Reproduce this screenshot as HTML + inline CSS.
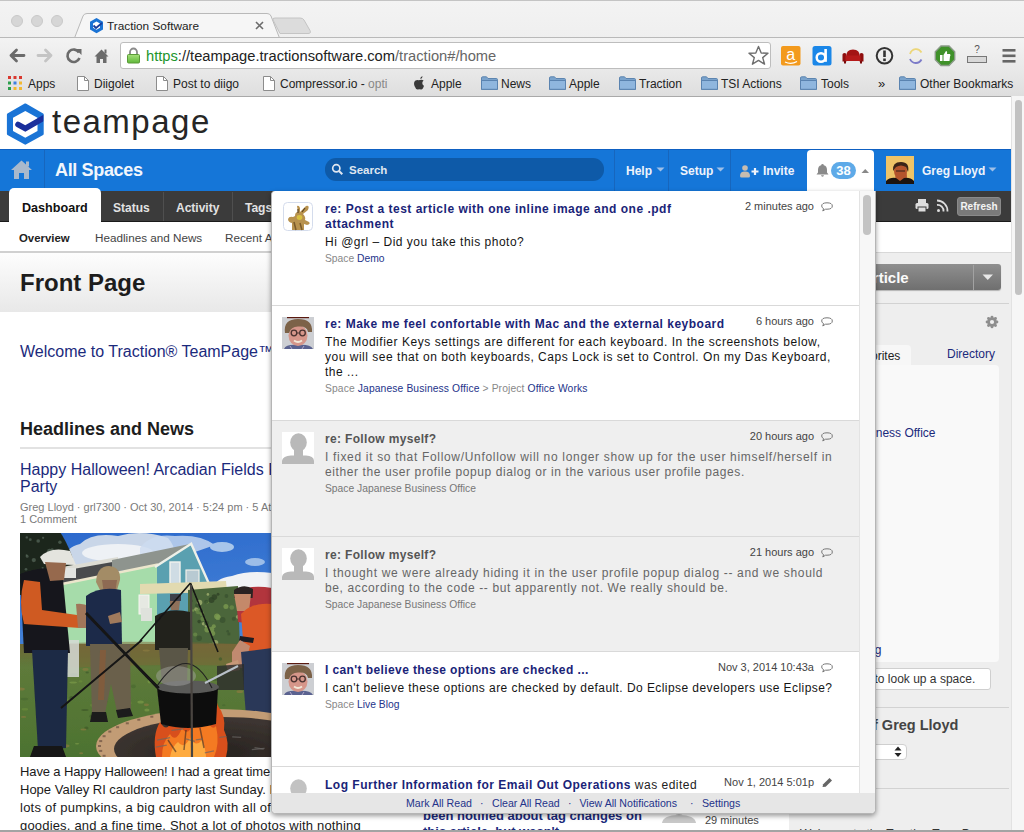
<!DOCTYPE html>
<html><head><meta charset="utf-8">
<style>
*{box-sizing:border-box;margin:0;padding:0}
html,body{width:1024px;height:832px;overflow:hidden;background:#fff;font-family:"Liberation Sans",sans-serif;color:#222}
.a{position:absolute;white-space:nowrap}
/* chrome */
#tabstrip{left:0;top:0;width:1024px;height:38px;background:linear-gradient(#f3f3f3,#efefef);border-top:1px solid #c4c4c4}
.tl{position:absolute;width:12px;height:12px;border-radius:50%;background:#d6d6d6;border:1px solid #c9c9c9;top:15px}
#toolbar{left:0;top:37px;width:1024px;height:35px;background:linear-gradient(#f3f3f3,#e8e8e8);border-top:1px solid #b9b9b9}
#bmbar{left:0;top:72px;width:1024px;height:25px;background:linear-gradient(#e8e8e8,#dedede);border-bottom:1px solid #a9a9a9}
#url{left:120px;top:42px;width:651px;height:27px;background:#fff;border:1px solid #bdbdbd;border-radius:3px}
.bm{position:absolute;top:77px;font-size:12px;color:#222;line-height:14px}
.doc{position:absolute;top:76px;width:11px;height:14px;border:1px solid #8a8a8a;background:#fff}
.fold{position:absolute;top:77px;width:16px;height:12px;background:linear-gradient(#a9c6e2,#6f98c2);border:1px solid #5e84ad;border-radius:1px}
/* page */
#blue{left:0;top:149px;width:1011px;height:42px;background:#1576d8;border-top:1px solid #0e60c2}
#dark{left:0;top:191px;width:1011px;height:31px;background:#3b3b3b;border-bottom:1px solid #1a1a1a}
.nav{position:absolute;top:163px;font-size:12px;font-weight:bold;color:#eef3fb;line-height:16px}
.vdiv{position:absolute;width:1px;background:#1766bd}
.dtab{position:absolute;top:200px;font-size:12px;font-weight:bold;color:#e2e2e2;line-height:16px}
.ddiv{position:absolute;top:192px;width:1px;height:29px;background:#4f4f4f}
.sub{position:absolute;top:231px;font-size:11.7px;color:#444;line-height:14px}
#fphead{left:0;top:251px;width:789px;height:61px;background:linear-gradient(#fdfdfd,#e8e8e8);border-top:2px solid #d0d0d0}
#side{left:789px;top:252px;width:222px;height:578px;background:#eeeeee;border-top:1px solid #d8d8d8}
#pscroll{left:1011px;top:96px;width:13px;height:734px;background:#f6f6f6;border-left:1px solid #e2e2e2}
#pthumb{left:1015px;top:100px;width:7px;height:195px;background:#c2c2c2;border-radius:4px}
#bottomline{left:0;top:830px;width:1024px;height:2px;background:#a3a3a3}
/* popup */
#pop{left:271px;top:191px;width:605px;height:623px;background:#fff;border:1px solid #b5b5b5;border-top:none;border-radius:4px 0 5px 5px;box-shadow:0 2px 5px rgba(0,0,0,.4);overflow:hidden}
.item{position:absolute;left:0;width:587px;height:115px;border-bottom:1px solid #d9d9d9}
.item.rd{background:#efefef}
.av{position:absolute;left:10px;top:11px;width:32px;height:32px}
.tt{position:absolute;left:53px;top:10.7px;font-size:12px;letter-spacing:0.5px;font-weight:bold;color:#1a2478;line-height:15px;white-space:nowrap}
.bd{position:absolute;left:53px;font-size:12px;letter-spacing:0.5px;color:#151515;line-height:15.2px;white-space:nowrap}
.sp{position:absolute;left:53px;font-size:10.3px;color:#888;line-height:12px;white-space:nowrap}
.sp b{font-weight:normal;color:#24338a}
.ts{position:absolute;right:45px;top:8px;font-size:11px;color:#444;line-height:14px}
.rd .tt{color:#555}.rd .bd{color:#666}.rd .sp{color:#777}.rd .sp b{color:#777}
.bub{position:absolute;right:26px;top:11px;width:12px;height:10px}
#pfoot{position:absolute;left:0;top:602px;width:603px;height:20px;background:#e6e6e6;font-size:10.6px;color:#24338a;line-height:20px;white-space:nowrap}
#pstrack{position:absolute;left:587px;top:0;width:17px;height:602px;background:#f7f7f7;border-left:1px solid #e3e3e3}
#psthumb{position:absolute;left:591px;top:4px;width:8px;height:40px;background:#c3c3c3;border-radius:4px}
</style></head><body>

<!-- ================= BROWSER CHROME ================= -->
<div id="tabstrip" class="a"></div>
<div class="tl" style="left:11px"></div>
<div class="tl" style="left:31px"></div>
<div class="tl" style="left:51px"></div>
<svg class="a" style="left:0;top:0" width="330" height="40">
  <path d="M74.5 38 L83 16 Q84 13.5 87 13.5 L267 13.5 Q270 13.5 271 16 L279.5 38" fill="#f6f6f6" stroke="#b9b9b9" stroke-width="1"/>
  <path d="M280 33.5 L273 20 Q272 18 275 18 L300 18 Q303 18 304 20 L310 30.5 Q311.5 33.5 308 33.5 Z" fill="#dcdcdc" stroke="#c4c4c4" stroke-width="1"/>
  <path d="M96.5 18 L103 21.8 L103 29.4 L96.5 33.2 L90 29.4 L90 21.8 Z" fill="#1a73d4"/>
  <path d="M96.5 21.5 L100 23.5 L100 27.7 L96.5 29.7 L93 27.7 L93 23.5 Z" fill="#fff"/>
  <path d="M93.5 25.5 L96 28 L102 23" fill="none" stroke="#183b9a" stroke-width="1.8"/>
  <path d="M256 22 L263 29 M263 22 L256 29" stroke="#6c6c6c" stroke-width="1.6"/>
</svg>
<div class="a" style="left:107px;top:19px;font-size:11.8px;color:#222;line-height:15px">Traction Software</div>

<div id="toolbar" class="a"></div>
<div id="bmbar" class="a"></div>
<svg class="a" style="left:0;top:40.8px" width="120" height="32">
  <path d="M11 14.5 L24 14.5 M16.5 9 L11 14.5 L16.5 20" fill="none" stroke="#6b6b6b" stroke-width="2.8" stroke-linecap="round" stroke-linejoin="round"/>
  <path d="M38 14.5 L51 14.5 M45.5 9 L51 14.5 L45.5 20" fill="none" stroke="#c4c4c4" stroke-width="2.8" stroke-linecap="round" stroke-linejoin="round"/>
  <path d="M79 11.5 A6.2 6.2 0 1 0 79.5 17" fill="none" stroke="#6b6b6b" stroke-width="2.6"/>
  <path d="M75.5 8 L81.5 8 L81.5 14 Z" fill="#6b6b6b"/>
  <path d="M94.5 15.5 L101.5 8.5 L108.5 15.5 L106.5 15.5 L106.5 22 L103 22 L103 18 L100 18 L100 22 L96.5 22 L96.5 15.5 Z" fill="#6b6b6b"/>
  <rect x="104.5" y="8.5" width="2" height="4" fill="#6b6b6b"/>
</svg>
<div id="url" class="a"></div>
<svg class="a" style="left:126px;top:47px" width="15" height="17"><path d="M4 7.5 L4 5 A3.5 3.5 0 0 1 11 5 L11 7.5" fill="none" stroke="#8a8a8a" stroke-width="1.8"/><defs><linearGradient id="lk" x1="0" y1="0" x2="0" y2="1"><stop offset="0" stop-color="#a6e07a"/><stop offset="1" stop-color="#5fb83a"/></linearGradient></defs><rect x="1.5" y="7.5" width="12" height="8.5" rx="1" fill="url(#lk)" stroke="#5a9a38" stroke-width="1"/></svg>
<div class="a" style="left:146px;top:48px;font-size:14.7px;color:#222;line-height:17px"><span style="color:#21952b">https</span>://teampage.tractionsoftware.com<span style="color:#666">/traction#/home</span></div>
<svg class="a" style="left:745px;top:44px" width="280" height="26">
  <path d="M13.5 2.5 L16.2 9 L23 9.3 L17.7 13.6 L19.6 20.2 L13.5 16.4 L7.4 20.2 L9.3 13.6 L4 9.3 L10.8 9 Z" fill="#fff" stroke="#6e6e6e" stroke-width="1.4" stroke-linejoin="round"/>
  <rect x="36" y="2" width="19.5" height="19.5" rx="2" fill="#f39a1d"/>
  <text x="45.7" y="16" font-family="Liberation Sans" font-size="16" fill="#fff" text-anchor="middle">a</text>
  <path d="M40 18 Q46 21 52 17.5" fill="none" stroke="#fff" stroke-width="1.3"/>
  <rect x="67.5" y="2" width="19" height="19.5" rx="2.5" fill="#1b87e8"/>
  <circle cx="76" cy="13.5" r="4.3" fill="none" stroke="#fff" stroke-width="2.5"/>
  <rect x="79.3" y="5" width="2.6" height="12.8" fill="#fff"/>
  <path d="M101.5 12 Q101 5.5 108 5.5 Q115 5.5 114.5 12 Z" fill="#a31414"/>
  <path d="M97.5 10.5 Q97.5 9 99.5 9 Q101.5 9 101.5 10.5 L101.5 17.5 L97.5 17.5 Z M114.5 10.5 Q114.5 9 116.5 9 Q118.5 9 118.5 10.5 L118.5 17.5 L114.5 17.5 Z" fill="#8e0e0e"/>
  <rect x="100.5" y="11.5" width="15" height="5.5" fill="#b51a1a"/>
  <rect x="99" y="17" width="2" height="2.5" fill="#7a0a0a"/><rect x="115" y="17" width="2" height="2.5" fill="#7a0a0a"/>
  <circle cx="139.5" cy="11.8" r="7.8" fill="none" stroke="#333" stroke-width="2"/>
  <rect x="138.2" y="6.5" width="2.6" height="6.5" fill="#333"/><rect x="138.2" y="14.5" width="2.6" height="2.6" fill="#333"/>
  <path d="M165 10 A6.5 7.5 0 0 1 176.5 8.5" fill="none" stroke="#ecd679" stroke-width="1.8"/>
  <path d="M165 15 A6.5 7 0 0 0 176.5 15.5" fill="none" stroke="#7c7bc8" stroke-width="1.8"/>
  <path d="M196 2 L204 2 L209.7 7.7 L209.7 15.8 L204 21.5 L196 21.5 L190.3 15.8 L190.3 7.7 Z" fill="#3f9129" stroke="#8a9a88" stroke-width="1.4"/>
  <path d="M195 11 L197.5 11 L197.5 17 L195 17 Z M198.5 11 L201 7 Q202.5 7 202 10 L205 10 Q206 11 205 12.5 L204.5 17 L198.5 17 Z" fill="#fff"/>
  <text x="232" y="9" font-family="Liberation Sans" font-size="10" fill="#555" text-anchor="middle">?</text>
  <rect x="222.5" y="12.5" width="19" height="6" fill="#d8d8d8" stroke="#777" stroke-width="1"/>
  <rect x="257.5" y="5" width="13" height="2.6" fill="#666"/>
  <rect x="257.5" y="10.5" width="13" height="2.6" fill="#666"/>
  <rect x="257.5" y="16" width="13" height="2.6" fill="#666"/>
</svg>

<!-- bookmarks -->
<svg class="a" style="left:8px;top:76px" width="15" height="14">
  <rect x="0" y="0" width="3" height="3" fill="#d9382f"/><rect x="5.5" y="0" width="3" height="3" fill="#d9382f"/><rect x="11" y="0" width="3" height="3" fill="#d9382f"/>
  <rect x="0" y="5.5" width="3" height="3" fill="#2c9e4b"/><rect x="5.5" y="5.5" width="3" height="3" fill="#3e7fe0"/><rect x="11" y="5.5" width="3" height="3" fill="#f2b830"/>
  <rect x="0" y="11" width="3" height="3" fill="#2c9e4b"/><rect x="5.5" y="11" width="3" height="3" fill="#f2b830"/><rect x="11" y="11" width="3" height="3" fill="#f2b830"/>
</svg>
<div class="bm" style="left:28px">Apps</div>
<svg class="a" style="left:77px;top:76px" width="12" height="15"><path d="M0.5 0.5 L7.5 0.5 L11.5 4.5 L11.5 14.5 L0.5 14.5 Z" fill="#fff" stroke="#8c8c8c"/><path d="M7.5 0.5 L7.5 4.5 L11.5 4.5" fill="none" stroke="#8c8c8c"/></svg>
<div class="bm" style="left:94px">Diigolet</div>
<svg class="a" style="left:156px;top:76px" width="12" height="15"><path d="M0.5 0.5 L7.5 0.5 L11.5 4.5 L11.5 14.5 L0.5 14.5 Z" fill="#fff" stroke="#8c8c8c"/><path d="M7.5 0.5 L7.5 4.5 L11.5 4.5" fill="none" stroke="#8c8c8c"/></svg>
<div class="bm" style="left:173px">Post to diigo</div>
<svg class="a" style="left:263px;top:76px" width="12" height="15"><path d="M0.5 0.5 L7.5 0.5 L11.5 4.5 L11.5 14.5 L0.5 14.5 Z" fill="#fff" stroke="#8c8c8c"/><path d="M7.5 0.5 L7.5 4.5 L11.5 4.5" fill="none" stroke="#8c8c8c"/></svg>
<div class="bm" style="left:280px">Compressor.io - <span style="color:#888">opti</span></div>
<svg class="a" style="left:413px;top:75px" width="14" height="16"><path d="M9.5 1 Q9.7 3.6 7.3 4.3 Q7.1 2 9.5 1 Z M7 5 Q9 4.4 10.6 5.5 Q8.8 6.8 9.4 9 Q10.2 10.6 11 10.8 Q10 14.5 8.2 14.5 Q7.3 14.2 6.4 14.2 Q5.4 14.2 4.6 14.6 Q2.8 14.4 1.5 11 Q0.2 7.5 2.5 5.6 Q4 4.6 5.6 5.2 Z" fill="#3a3a3a"/></svg>
<div class="bm" style="left:431px">Apple</div>
<svg class="a" style="left:481px;top:76px" width="17" height="14"><path d="M0.5 2 Q0.5 0.8 1.7 0.8 L5.5 0.8 L7 2.5 L15.3 2.5 Q16.5 2.5 16.5 3.7 L16.5 13.3 L0.5 13.3 Z" fill="#7aa3cc" stroke="#5d85b0"/><path d="M0.5 4.5 L16.5 4.5 L16.5 13.3 L0.5 13.3 Z" fill="#8fb6de" stroke="#5a83b0"/></svg>
<div class="bm" style="left:501px">News</div>
<svg class="a" style="left:549px;top:76px" width="17" height="14"><path d="M0.5 2 Q0.5 0.8 1.7 0.8 L5.5 0.8 L7 2.5 L15.3 2.5 Q16.5 2.5 16.5 3.7 L16.5 13.3 L0.5 13.3 Z" fill="#7aa3cc" stroke="#5d85b0"/><path d="M0.5 4.5 L16.5 4.5 L16.5 13.3 L0.5 13.3 Z" fill="#8fb6de" stroke="#5a83b0"/></svg>
<div class="bm" style="left:569px">Apple</div>
<svg class="a" style="left:619px;top:76px" width="17" height="14"><path d="M0.5 2 Q0.5 0.8 1.7 0.8 L5.5 0.8 L7 2.5 L15.3 2.5 Q16.5 2.5 16.5 3.7 L16.5 13.3 L0.5 13.3 Z" fill="#7aa3cc" stroke="#5d85b0"/><path d="M0.5 4.5 L16.5 4.5 L16.5 13.3 L0.5 13.3 Z" fill="#8fb6de" stroke="#5a83b0"/></svg>
<div class="bm" style="left:639px">Traction</div>
<svg class="a" style="left:701px;top:76px" width="17" height="14"><path d="M0.5 2 Q0.5 0.8 1.7 0.8 L5.5 0.8 L7 2.5 L15.3 2.5 Q16.5 2.5 16.5 3.7 L16.5 13.3 L0.5 13.3 Z" fill="#7aa3cc" stroke="#5d85b0"/><path d="M0.5 4.5 L16.5 4.5 L16.5 13.3 L0.5 13.3 Z" fill="#8fb6de" stroke="#5a83b0"/></svg>
<div class="bm" style="left:721px">TSI Actions</div>
<svg class="a" style="left:800px;top:76px" width="17" height="14"><path d="M0.5 2 Q0.5 0.8 1.7 0.8 L5.5 0.8 L7 2.5 L15.3 2.5 Q16.5 2.5 16.5 3.7 L16.5 13.3 L0.5 13.3 Z" fill="#7aa3cc" stroke="#5d85b0"/><path d="M0.5 4.5 L16.5 4.5 L16.5 13.3 L0.5 13.3 Z" fill="#8fb6de" stroke="#5a83b0"/></svg>
<div class="bm" style="left:821px">Tools</div>
<div class="bm" style="left:878px;font-size:13px">»</div>
<svg class="a" style="left:899px;top:76px" width="17" height="14"><path d="M0.5 2 Q0.5 0.8 1.7 0.8 L5.5 0.8 L7 2.5 L15.3 2.5 Q16.5 2.5 16.5 3.7 L16.5 13.3 L0.5 13.3 Z" fill="#7aa3cc" stroke="#5d85b0"/><path d="M0.5 4.5 L16.5 4.5 L16.5 13.3 L0.5 13.3 Z" fill="#8fb6de" stroke="#5a83b0"/></svg>
<div class="bm" style="left:920px">Other Bookmarks</div>

<!-- ================= PAGE ================= -->
<div class="a" style="left:0;top:97px;width:1011px;height:52px;background:#fff"></div>
<svg class="a" style="left:5px;top:101px" width="42" height="46">
  <defs><clipPath id="hx"><path d="M20.3 2.5 L38.3 12.8 L38.3 33.6 L20.3 43.5 L2.3 33.6 L2.3 12.8 Z"/></clipPath></defs>
  <path d="M20.3 3.5 L37.6 13.4 L37.6 33 L20.3 42.6 L3 33 L3 13.4 Z" fill="#1a74d6" stroke="#1a74d6" stroke-width="2.2" stroke-linejoin="round"/>
  <path d="M20.3 10 L32.5 16.8 L32.5 30 L20.3 36.7 L8 30 L8 16.8 Z" fill="#fff"/>
  <path d="M13 23.5 L20.3 27.5 L42 15" fill="none" stroke="#1a2f9c" stroke-width="5.6" stroke-linecap="round" clip-path="url(#hx)"/>
</svg>
<div class="a" style="left:52px;top:102.5px;font-size:33px;color:#262626;letter-spacing:1.5px;line-height:38px">teampage</div>

<div id="blue" class="a"></div>
<svg class="a" style="left:10px;top:159px" width="24" height="22">
  <path d="M1 11 L11.5 1.5 L22 11 L19 11 L19 20 L14 20 L14 14 L9 14 L9 20 L4 20 L4 11 Z" fill="#a9b9cc"/>
  <rect x="16" y="2.5" width="3" height="5" fill="#a9b9cc"/>
</svg>
<div class="vdiv" style="left:44px;top:150px;height:41px"></div>
<div class="a" style="left:55px;top:159px;font-size:18px;font-weight:bold;color:#f2f6fc;letter-spacing:-0.35px;line-height:22px">All Spaces</div>
<div class="a" style="left:325px;top:158px;width:279px;height:23px;background:#0e5aa8;border-radius:11px"></div>
<svg class="a" style="left:331px;top:163px" width="13" height="13"><circle cx="5.3" cy="5.3" r="3.6" fill="none" stroke="#dfe6f0" stroke-width="1.7"/><path d="M8 8 L11.3 11.3" stroke="#dfe6f0" stroke-width="2"/></svg>
<div class="a" style="left:349px;top:162px;font-size:11.5px;font-weight:bold;color:#dfe6f0;line-height:16px">Search</div>
<div class="vdiv" style="left:614px;top:150px;height:41px"></div>
<div class="nav" style="left:626px">Help</div>
<svg class="a" style="left:656px;top:167px" width="10" height="6"><path d="M0.5 0.5 L8.5 0.5 L4.5 4.5 Z" fill="#9fc0e8"/></svg>
<div class="vdiv" style="left:668px;top:150px;height:41px"></div>
<div class="nav" style="left:680px">Setup</div>
<svg class="a" style="left:716px;top:167px" width="10" height="6"><path d="M0.5 0.5 L8.5 0.5 L4.5 4.5 Z" fill="#9fc0e8"/></svg>
<div class="vdiv" style="left:730px;top:150px;height:41px"></div>
<svg class="a" style="left:739px;top:164px" width="22" height="14"><circle cx="6" cy="4" r="2.8" fill="#c6bcb0"/><path d="M1 12 Q1 7.6 6 7.6 Q11 7.6 11 12 Q11 13.5 9.5 13.5 L2.5 13.5 Q1 13.5 1 12 Z" fill="#c6bcb0"/><path d="M12.5 7.5 L19.5 7.5 M16 4 L16 11" stroke="#eef3fb" stroke-width="2.2"/></svg>
<div class="nav" style="left:763px">Invite</div>
<!-- bell tab -->
<div class="a" style="left:807px;top:150px;width:67px;height:42px;background:#fff;border-radius:4px 4px 0 0"></div>
<svg class="a" style="left:816px;top:163px" width="14" height="14"><path d="M6.5 1 Q7.8 1 7.8 2.2 Q11 3 11 7 L11 9.5 L12.5 11.5 L0.5 11.5 L2 9.5 L2 7 Q2 3 5.2 2.2 Q5.2 1 6.5 1 Z M5 12.3 L8 12.3 Q7.8 13.7 6.5 13.7 Q5.2 13.7 5 12.3 Z" fill="#8a8a8a"/></svg>
<div class="a" style="left:831px;top:162px;width:25px;height:17px;background:#5eaae8;border-radius:9px;font-size:13px;font-weight:bold;color:#fff;text-align:center;line-height:17px">38</div>
<svg class="a" style="left:861px;top:168px" width="9" height="6"><path d="M0.5 5 L8 5 L4.25 1 Z" fill="#888"/></svg>
<!-- avatar greg -->
<svg class="a" style="left:886px;top:156px" width="28" height="28">
  <rect width="28" height="28" fill="#efc468"/>
  <path d="M9 27 Q9 14 14 12 Q20 12 21 20 L20 27 Z" fill="#b85a30"/>
  <ellipse cx="14.5" cy="15" rx="6.5" ry="8.5" fill="#b4542c"/>
  <path d="M7 15 Q6 6 15 6 Q24 6 22 16 L20 11 Q15 8 10 11 Z" fill="#3a2418"/>
  <path d="M10 15 L19 15" stroke="#5a3020" stroke-width="1.4"/>
  <path d="M0 28 L0 25 Q4 21 10 22 L14 25 L18 22 Q24 21 28 25 L28 28 Z" fill="#1c1410"/>
</svg>
<div class="nav" style="left:922px;font-size:12px">Greg Lloyd</div>
<svg class="a" style="left:988px;top:167px" width="10" height="6"><path d="M0.5 0.5 L8.5 0.5 L4.5 4.5 Z" fill="#9fc0e8"/></svg>

<div id="dark" class="a"></div>
<div class="a" style="left:9px;top:188px;width:92px;height:34px;background:#fff;border-radius:5px 5px 0 0"></div>
<div class="dtab" style="left:22px;color:#111;font-size:12.6px">Dashboard</div>
<div class="dtab" style="left:113px">Status</div>
<div class="ddiv" style="left:163px"></div>
<div class="dtab" style="left:176px">Activity</div>
<div class="ddiv" style="left:232px"></div>
<div class="dtab" style="left:245px">Tags</div>
<svg class="a" style="left:914px;top:198px" width="36" height="16">
  <rect x="4" y="1" width="8" height="4" fill="#ddd"/>
  <rect x="1.5" y="5" width="13" height="6" rx="1.5" fill="#ddd"/>
  <rect x="4" y="9" width="8" height="5" fill="#ddd" stroke="#3b3b3b" stroke-width="1"/>
  <circle cx="24.5" cy="12.5" r="1.5" fill="#ddd"/>
  <path d="M23 7 A6 6 0 0 1 29.5 13.5" fill="none" stroke="#ddd" stroke-width="1.8"/>
  <path d="M23 2.5 A10.5 10.5 0 0 1 33.5 13.5" fill="none" stroke="#ddd" stroke-width="1.8"/>
</svg>
<div class="a" style="left:957px;top:197px;width:44px;height:19px;background:#7a7a7a;border-radius:3px;border:1px solid #8a8a8a;font-size:10px;font-weight:bold;color:#f4f4f4;text-align:center;line-height:17px">Refresh</div>

<div class="sub" style="left:19px;font-weight:bold;color:#222;font-size:11.4px">Overview</div>
<div class="sub" style="left:95px">Headlines and News</div>
<div class="sub" style="left:225px">Recent Activity</div>

<div id="fphead" class="a"></div>
<div class="a" style="left:20px;top:269px;font-size:24px;font-weight:bold;color:#1d1d1d;line-height:28px">Front Page</div>
<div class="a" style="left:20px;top:343px;font-size:16px;color:#1b2a7c;line-height:18px">Welcome to Traction® TeamPage™</div>
<div class="a" style="left:20px;top:418px;font-size:18px;font-weight:bold;color:#1d1d1d;line-height:22px">Headlines and News</div>
<div class="a" style="left:20px;top:447px;width:760px;height:2px;background:#e2e2e2"></div>
<div class="a" style="left:20px;top:461px;font-size:16px;color:#1b2a7c;line-height:17px">Happy Halloween! Arcadian Fields Fall Cauldron<br>Party</div>
<div class="a" style="left:20px;top:501px;font-size:11px;color:#7a7a7a;line-height:12px">Greg Lloyd · grl7300 · Oct 30, 2014 · 5:24 pm · 5 Attachments</div>
<div class="a" style="left:20px;top:513px;font-size:11px;color:#7a7a7a;line-height:12px">1 Comment</div>

<svg class="a" style="left:20px;top:533px" width="380" height="224" viewBox="20 533 380 224">
<defs>
<linearGradient id="sky" x1="0" y1="0" x2="0.2" y2="1"><stop offset="0" stop-color="#2a68cc"/><stop offset="1" stop-color="#5e9ae0"/></linearGradient>
<linearGradient id="grass" x1="0" y1="0" x2="0" y2="1"><stop offset="0" stop-color="#6e6638"/><stop offset="0.2" stop-color="#5e7a3a"/><stop offset="1" stop-color="#4b7230"/></linearGradient>
<radialGradient id="pit" cx="0.45" cy="0.55" r="0.55"><stop offset="0" stop-color="#26221f"/><stop offset="1" stop-color="#3e3632"/></radialGradient>
<filter id="bl" x="-5%" y="-5%" width="110%" height="110%"><feGaussianBlur stdDeviation="0.75"/></filter>
</defs>
<rect x="20" y="533" width="380" height="224" fill="#4d7431"/>
<g filter="url(#bl)">
<rect x="16" y="529" width="388" height="232" fill="url(#sky)"/>
<path d="M66 566 Q62 548 80 544 Q92 532 118 536 Q142 529 168 538 Q180 552 170 566 Z" fill="#c9d6e8"/>
<ellipse cx="118" cy="553" rx="36" ry="9" fill="#eef1f5"/>
<path d="M140 548 Q150 533 175 536 Q200 534 215 545 L195 552 L140 556 Z" fill="#cddcf0" opacity="0.8"/>
<path d="M212 591 Q214 578 232 576 Q248 570 272 573 L272 592 Z" fill="#f0f2f5"/>
<ellipse cx="222" cy="547" rx="12" ry="5" fill="#a8c6ea"/>
<ellipse cx="255" cy="562" rx="10" ry="4" fill="#9cbde8"/>
<path d="M16 529 L58 529 Q66 540 72 556 Q76 572 72 584 L16 596 Z" fill="#1f281e"/>
<circle cx="38.2" cy="541.0" r="1.8" fill="#56665a" opacity="0.7"/>
<circle cx="27.2" cy="556.4" r="1.4" fill="#56665a" opacity="0.7"/>
<circle cx="26.6" cy="555.3" r="1.0" fill="#56665a" opacity="0.7"/>
<circle cx="43.1" cy="537.8" r="1.1" fill="#56665a" opacity="0.7"/>
<circle cx="42.7" cy="568.1" r="1.1" fill="#56665a" opacity="0.7"/>
<circle cx="33.8" cy="560.1" r="2.1" fill="#56665a" opacity="0.7"/>
<circle cx="49.4" cy="550.9" r="2.2" fill="#56665a" opacity="0.7"/>
<circle cx="26.0" cy="569.3" r="1.3" fill="#56665a" opacity="0.7"/>
<circle cx="30.3" cy="539.7" r="1.4" fill="#56665a" opacity="0.7"/>
<circle cx="59.9" cy="542.2" r="1.7" fill="#56665a" opacity="0.7"/>
<circle cx="52.1" cy="549.9" r="1.7" fill="#56665a" opacity="0.7"/>
<circle cx="26.8" cy="537.4" r="1.2" fill="#56665a" opacity="0.7"/>
<circle cx="53.9" cy="552.1" r="1.4" fill="#56665a" opacity="0.7"/>
<circle cx="49.8" cy="553.1" r="1.4" fill="#56665a" opacity="0.7"/>
<path d="M62 568 L112 560 L112 578 L62 586 Z" fill="#4a4c4e"/>
<path d="M62 567 L118 557 L118 561 L62 571 Z" fill="#dcdcd4"/>
<rect x="64" y="568" width="12" height="10" fill="#e2e4e0"/>
<path d="M112 560 L191 543.7 L160 566 L112 572 Z" fill="#8e948e"/>
<path d="M57 585 L148 566 L158 565 L158 645 L57 645 Z" fill="#a6dcaa"/>
<path d="M57 585 L158 564.5" stroke="#ece6cc" stroke-width="2.4"/>
<path d="M104 612 Q112 600 118 612 L122 645 L104 645 Z" fill="#76b09a" opacity="0.7"/>
<path d="M157 566 L191.2 543.7 L208 584 L208 645 L157 645 Z" fill="#5aa0b0"/>
<path d="M155 567 L191.2 543.7 L210 586" fill="none" stroke="#eef0e8" stroke-width="2.4"/>
<rect x="170" y="562" width="10" height="24" fill="#cfdce4" stroke="#f2f2ee" stroke-width="1.4"/>
<rect x="186" y="570" width="13" height="16" fill="#b8cad2" stroke="#f0f0ea" stroke-width="1.2"/>
<rect x="139" y="595" width="10" height="19" fill="#e6e9e2" stroke="#f6f6f0" stroke-width="1"/>
<rect x="141" y="608" width="11" height="13" fill="#dfe2dc"/>
<path d="M140 584 L226 581 L227 592 L140 594 Z" fill="#e2dab0"/>
<path d="M188 590 L238 586 L240 652 L188 652 Z" fill="#4c663a"/>
<circle cx="227.7" cy="631.3" r="1.3" fill="#3a5230" opacity="0.8"/>
<circle cx="203.0" cy="618.7" r="2.5" fill="#6a8a48" opacity="0.8"/>
<circle cx="202.4" cy="648.8" r="2.1" fill="#7a9a50" opacity="0.8"/>
<circle cx="196.2" cy="609.2" r="2.0" fill="#a0b070" opacity="0.8"/>
<circle cx="236.1" cy="592.8" r="2.2" fill="#2e4428" opacity="0.8"/>
<circle cx="231.8" cy="607.5" r="2.3" fill="#6a8a48" opacity="0.8"/>
<circle cx="217.0" cy="616.3" r="2.9" fill="#7a9a50" opacity="0.8"/>
<circle cx="211.7" cy="629.2" r="2.5" fill="#7a9a50" opacity="0.8"/>
<circle cx="203.5" cy="623.8" r="1.7" fill="#a0b070" opacity="0.8"/>
<circle cx="207.3" cy="629.5" r="2.9" fill="#7a9a50" opacity="0.8"/>
<circle cx="205.8" cy="625.9" r="1.3" fill="#a0b070" opacity="0.8"/>
<circle cx="226.4" cy="596.0" r="1.9" fill="#3a5230" opacity="0.8"/>
<circle cx="233.8" cy="618.8" r="2.0" fill="#3a5230" opacity="0.8"/>
<circle cx="215.5" cy="642.8" r="2.8" fill="#a0b070" opacity="0.8"/>
<circle cx="201.9" cy="613.7" r="2.4" fill="#6a8a48" opacity="0.8"/>
<circle cx="207.0" cy="602.3" r="1.5" fill="#7a9a50" opacity="0.8"/>
<circle cx="199.6" cy="602.5" r="2.7" fill="#a0b070" opacity="0.8"/>
<circle cx="197.1" cy="605.5" r="2.0" fill="#3a5230" opacity="0.8"/>
<circle cx="206.5" cy="623.1" r="2.4" fill="#3a5230" opacity="0.8"/>
<circle cx="213.8" cy="626.3" r="2.0" fill="#7a9a50" opacity="0.8"/>
<circle cx="231.5" cy="647.0" r="1.9" fill="#2e4428" opacity="0.8"/>
<circle cx="207.9" cy="594.4" r="1.3" fill="#a0b070" opacity="0.8"/>
<circle cx="191.4" cy="600.9" r="1.4" fill="#3a5230" opacity="0.8"/>
<circle cx="218.0" cy="594.3" r="1.5" fill="#2e4428" opacity="0.8"/>
<circle cx="193.1" cy="610.5" r="1.3" fill="#7a9a50" opacity="0.8"/>
<circle cx="198.4" cy="611.3" r="2.9" fill="#6a8a48" opacity="0.8"/>
<circle cx="218.1" cy="617.4" r="2.7" fill="#7a9a50" opacity="0.8"/>
<circle cx="237.7" cy="616.9" r="1.8" fill="#a0b070" opacity="0.8"/>
<circle cx="195.2" cy="634.5" r="2.1" fill="#6a8a48" opacity="0.8"/>
<circle cx="222.6" cy="620.0" r="2.9" fill="#3a5230" opacity="0.8"/>
<circle cx="214.4" cy="597.1" r="2.8" fill="#2e4428" opacity="0.8"/>
<circle cx="225.9" cy="606.5" r="2.5" fill="#7a9a50" opacity="0.8"/>
<circle cx="201.1" cy="610.7" r="1.8" fill="#3a5230" opacity="0.8"/>
<circle cx="199.1" cy="621.6" r="1.8" fill="#2e4428" opacity="0.8"/>
<circle cx="199.2" cy="638.3" r="2.7" fill="#3a5230" opacity="0.8"/>
<circle cx="228.9" cy="633.9" r="1.6" fill="#3a5230" opacity="0.8"/>
<circle cx="212.6" cy="633.3" r="2.6" fill="#7a9a50" opacity="0.8"/>
<circle cx="211.6" cy="600.0" r="2.9" fill="#2e4428" opacity="0.8"/>
<circle cx="210.4" cy="646.1" r="2.9" fill="#6a8a48" opacity="0.8"/>
<circle cx="206.2" cy="601.7" r="2.0" fill="#3a5230" opacity="0.8"/>
<path d="M236 592 Q250 584 272 588 L272 626 L238 622 Z" fill="#b2343e"/>
<path d="M272 578 L404 578 L404 650 L272 650 Z" fill="#5d6d3a"/>
<path d="M16 644 L404 644 L404 761 L16 761 Z" fill="url(#grass)"/>
<path d="M70 643 Q150 640 240 644 L240 666 Q150 663 70 668 Z" fill="#7c6538" opacity="0.5"/>
<ellipse cx="104.4" cy="701.6" rx="3.6" ry="1.4" fill="#4a6a30" opacity="0.7"/>
<ellipse cx="183.2" cy="735.6" rx="3.6" ry="0.9" fill="#7a9a48" opacity="0.7"/>
<ellipse cx="117.1" cy="726.1" rx="2.7" ry="1.0" fill="#3e5a2a" opacity="0.7"/>
<ellipse cx="217.3" cy="685.6" rx="2.7" ry="1.7" fill="#6a8a3a" opacity="0.7"/>
<ellipse cx="41.2" cy="667.0" rx="1.6" ry="1.5" fill="#3e5a2a" opacity="0.7"/>
<ellipse cx="136.3" cy="720.2" rx="3.6" ry="2.0" fill="#4a6a30" opacity="0.7"/>
<ellipse cx="184.3" cy="687.5" rx="2.9" ry="0.8" fill="#4a6a30" opacity="0.7"/>
<ellipse cx="219.8" cy="727.7" rx="2.8" ry="1.9" fill="#7a9a48" opacity="0.7"/>
<ellipse cx="128.5" cy="743.3" rx="1.6" ry="1.1" fill="#3e5a2a" opacity="0.7"/>
<ellipse cx="145.3" cy="731.7" rx="2.1" ry="1.3" fill="#8a7a40" opacity="0.7"/>
<ellipse cx="52.8" cy="747.4" rx="3.7" ry="1.6" fill="#8a7a40" opacity="0.7"/>
<ellipse cx="223.8" cy="705.3" rx="1.8" ry="1.0" fill="#4a6a30" opacity="0.7"/>
<ellipse cx="147.6" cy="743.4" rx="3.0" ry="1.7" fill="#3e5a2a" opacity="0.7"/>
<ellipse cx="57.5" cy="665.1" rx="3.3" ry="1.5" fill="#4a6a30" opacity="0.7"/>
<ellipse cx="101.5" cy="705.5" rx="2.7" ry="1.7" fill="#4a6a30" opacity="0.7"/>
<ellipse cx="240.8" cy="656.1" rx="2.2" ry="1.7" fill="#3e5a2a" opacity="0.7"/>
<ellipse cx="146.9" cy="710.1" rx="2.6" ry="1.5" fill="#7a9a48" opacity="0.7"/>
<ellipse cx="146.4" cy="704.8" rx="2.6" ry="1.4" fill="#8a7a40" opacity="0.7"/>
<ellipse cx="139.5" cy="750.7" rx="3.7" ry="1.9" fill="#4a6a30" opacity="0.7"/>
<ellipse cx="84.9" cy="709.9" rx="3.6" ry="1.0" fill="#3e5a2a" opacity="0.7"/>
<ellipse cx="50.4" cy="697.3" rx="3.2" ry="1.3" fill="#7a9a48" opacity="0.7"/>
<ellipse cx="73.2" cy="682.4" rx="3.7" ry="1.0" fill="#7a9a48" opacity="0.7"/>
<ellipse cx="199.0" cy="720.6" rx="2.1" ry="1.0" fill="#3e5a2a" opacity="0.7"/>
<ellipse cx="136.9" cy="729.9" rx="2.5" ry="1.4" fill="#7a9a48" opacity="0.7"/>
<ellipse cx="267.5" cy="739.1" rx="3.3" ry="2.0" fill="#3e5a2a" opacity="0.7"/>
<ellipse cx="121.0" cy="695.1" rx="2.3" ry="1.7" fill="#8a7a40" opacity="0.7"/>
<ellipse cx="24.9" cy="709.3" rx="3.3" ry="1.3" fill="#6a8a3a" opacity="0.7"/>
<ellipse cx="149.4" cy="681.6" rx="1.8" ry="1.9" fill="#7a9a48" opacity="0.7"/>
<ellipse cx="77.1" cy="743.8" rx="2.2" ry="0.8" fill="#7a9a48" opacity="0.7"/>
<ellipse cx="214.7" cy="678.9" rx="3.5" ry="1.8" fill="#3e5a2a" opacity="0.7"/>
<ellipse cx="189.0" cy="751.2" rx="1.9" ry="1.9" fill="#6a8a3a" opacity="0.7"/>
<ellipse cx="162.6" cy="724.9" rx="2.2" ry="1.8" fill="#7a9a48" opacity="0.7"/>
<ellipse cx="65.8" cy="745.8" rx="3.8" ry="1.6" fill="#8a7a40" opacity="0.7"/>
<ellipse cx="220.4" cy="659.0" rx="1.7" ry="1.8" fill="#3e5a2a" opacity="0.7"/>
<ellipse cx="133.4" cy="686.3" rx="2.5" ry="1.9" fill="#4a6a30" opacity="0.7"/>
<ellipse cx="175.4" cy="654.6" rx="3.8" ry="2.0" fill="#3e5a2a" opacity="0.7"/>
<ellipse cx="85.5" cy="669.4" rx="3.1" ry="1.4" fill="#8a7a40" opacity="0.7"/>
<ellipse cx="71.5" cy="697.7" rx="2.2" ry="1.8" fill="#3e5a2a" opacity="0.7"/>
<ellipse cx="268.6" cy="654.0" rx="3.3" ry="1.5" fill="#7a9a48" opacity="0.7"/>
<ellipse cx="67.4" cy="700.8" rx="1.8" ry="1.8" fill="#6a8a3a" opacity="0.7"/>
<ellipse cx="128.0" cy="703.0" rx="3.9" ry="1.2" fill="#6a8a3a" opacity="0.7"/>
<ellipse cx="73.8" cy="674.6" rx="3.6" ry="1.6" fill="#3e5a2a" opacity="0.7"/>
<ellipse cx="179.0" cy="693.3" rx="4.0" ry="1.8" fill="#8a7a40" opacity="0.7"/>
<ellipse cx="23.6" cy="716.9" rx="2.6" ry="0.9" fill="#8a7a40" opacity="0.7"/>
<ellipse cx="186.3" cy="690.8" rx="3.2" ry="1.1" fill="#4a6a30" opacity="0.7"/>
<ellipse cx="80.6" cy="681.4" rx="2.0" ry="1.1" fill="#6a8a3a" opacity="0.7"/>
<ellipse cx="20.9" cy="689.0" rx="3.9" ry="1.5" fill="#8a7a40" opacity="0.7"/>
<ellipse cx="81.1" cy="753.3" rx="2.0" ry="1.0" fill="#8a7a40" opacity="0.7"/>
<ellipse cx="103.8" cy="659.0" rx="2.8" ry="1.0" fill="#8a7a40" opacity="0.7"/>
<ellipse cx="146.2" cy="650.5" rx="3.5" ry="1.0" fill="#8a7a40" opacity="0.7"/>
<ellipse cx="166.7" cy="692.2" rx="2.3" ry="1.1" fill="#8a7a40" opacity="0.7"/>
<ellipse cx="166.4" cy="706.6" rx="3.1" ry="1.7" fill="#3e5a2a" opacity="0.7"/>
<ellipse cx="239.8" cy="691.7" rx="3.3" ry="1.4" fill="#8a7a40" opacity="0.7"/>
<ellipse cx="91.0" cy="716.2" rx="1.6" ry="1.8" fill="#3e5a2a" opacity="0.7"/>
<ellipse cx="243.0" cy="717.1" rx="1.8" ry="1.4" fill="#4a6a30" opacity="0.7"/>
<ellipse cx="146.1" cy="739.3" rx="3.6" ry="1.5" fill="#7a9a48" opacity="0.7"/>
<ellipse cx="243.2" cy="723.1" rx="1.7" ry="0.9" fill="#3e5a2a" opacity="0.7"/>
<ellipse cx="179.3" cy="752.7" rx="3.6" ry="1.5" fill="#6a8a3a" opacity="0.7"/>
<ellipse cx="176.9" cy="717.0" rx="2.7" ry="0.8" fill="#3e5a2a" opacity="0.7"/>
<ellipse cx="219.4" cy="730.1" rx="3.7" ry="0.9" fill="#4a6a30" opacity="0.7"/>
<ellipse cx="151.5" cy="729.8" rx="2.1" ry="0.9" fill="#6a8a3a" opacity="0.7"/>
<ellipse cx="86.4" cy="728.0" rx="2.1" ry="1.6" fill="#3e5a2a" opacity="0.7"/>
<ellipse cx="135.1" cy="740.5" rx="2.7" ry="1.6" fill="#7a9a48" opacity="0.7"/>
<ellipse cx="211.7" cy="716.0" rx="1.7" ry="1.0" fill="#3e5a2a" opacity="0.7"/>
<ellipse cx="83.5" cy="729.5" rx="3.1" ry="1.0" fill="#8a7a40" opacity="0.7"/>
<ellipse cx="140.6" cy="702.0" rx="3.2" ry="1.6" fill="#7a9a48" opacity="0.7"/>
<ellipse cx="92.7" cy="705.3" rx="2.7" ry="1.7" fill="#6a8a3a" opacity="0.7"/>
<ellipse cx="268.3" cy="708.8" rx="3.9" ry="1.9" fill="#8a7a40" opacity="0.7"/>
<ellipse cx="24.4" cy="699.1" rx="3.9" ry="1.3" fill="#4a6a30" opacity="0.7"/>
<ellipse cx="87.2" cy="672.5" rx="1.7" ry="0.9" fill="#3e5a2a" opacity="0.7"/>
<path d="M67 640 L79 640 L79 677 L67 677 Z" fill="#d6dad6" opacity="0.85"/>
<path d="M20 574 Q38 566 62 569 L70 653 L24 653 Z" fill="#17181c"/>
<path d="M24 580 Q18 602 24 624 L80 628 L84 616 L42 610 L40 582 Z" fill="#cf5a22"/>
<path d="M40 557 Q50 546 70 551 L76 565 L44 564 Z" fill="#e4e4de"/>
<path d="M45 562 L66 563 L64 580 L50 581 Z" fill="#96694e"/>
<path d="M76 604 Q88 602 99 614 L98 628 L78 628 Z" fill="#a0765a"/>
<path d="M32 650 L68 650 L66 748 L38 750 Z" fill="#1e2a44"/>
<path d="M34 746 L62 746 L66 757 L30 757 Z" fill="#121212"/>
<path d="M96 582 Q97 566 109 566 Q121 567 120 580 L117 590 L100 590 Z" fill="#a38c66"/>
<path d="M102 580 L117 580 L115 594 L104 594 Z" fill="#8e6a52"/>
<path d="M86 596 Q100 586 121 590 L122 646 L86 646 Z" fill="#1c2948"/>
<path d="M108 616 L120 612 L122 622 L110 624 Z" fill="#a07a5c"/>
<path d="M90 644 L130 644 L131 712 L118 716 L111 684 L104 718 L92 714 Z" fill="#6a604c"/>
<path d="M100 650 L106 650 L104 700 L98 700 Z" fill="#8a5a38" opacity="0.7"/>
<path d="M92 712 L106 712 L108 722 L90 722 Z M116 710 L130 708 L133 716 L118 718 Z" fill="#1a1a1a"/>
<rect x="170" y="594" width="11" height="7" fill="#3c3f4c"/>
<path d="M169.6 601 L180 601 L179 610 L171 610 Z" fill="#8e705a"/>
<path d="M155 616 Q170 607 190 612 L192 650 L155 650 Z" fill="#22201f"/>
<path d="M159 648 L188 648 L187 683 L162 683 Z" fill="#5a5646"/>
<path d="M234 590 Q244 583 253 589 L252.6 598 L234 598 Z" fill="#2a2420"/>
<path d="M234 594 L251 594 L249 611 L237 611 Z" fill="#c4896a"/>
<path d="M241 614 Q252 602 272 604 L272 652 L244 652 Z" fill="#dc5826"/>
<path d="M240 636 L254 638 L253 643 L239 641 Z" fill="#1a1a22"/>
<path d="M232 652 L240 640 L250 646 L244 668 L232 668 Z" fill="#c08a70"/>
<path d="M241 652 L272 648 L272 716 L246 716 Z" fill="#2c3958"/>
<path d="M226 664 L238 660 L240 670 L228 672 Z" fill="#c89878"/>
<path d="M217 666 L244 664 L244 690 L217 690 Z" fill="#2a2a2a" opacity="0.8"/>
<ellipse cx="216" cy="746" rx="120" ry="37" fill="#c29c74"/>
<rect x="195.9" y="710.4" width="3" height="2" fill="#6a5040" opacity="0.7"/>
<rect x="179.9" y="711.5" width="3" height="2" fill="#6a5040" opacity="0.7"/>
<rect x="164.6" y="713.3" width="3" height="2" fill="#6a5040" opacity="0.7"/>
<rect x="150.3" y="715.7" width="3" height="2" fill="#6a5040" opacity="0.7"/>
<rect x="137.3" y="718.7" width="3" height="2" fill="#6a5040" opacity="0.7"/>
<rect x="125.8" y="722.3" width="3" height="2" fill="#6a5040" opacity="0.7"/>
<rect x="116.1" y="726.2" width="3" height="2" fill="#6a5040" opacity="0.7"/>
<rect x="108.3" y="730.6" width="3" height="2" fill="#6a5040" opacity="0.7"/>
<rect x="102.6" y="735.2" width="3" height="2" fill="#6a5040" opacity="0.7"/>
<rect x="99.2" y="740.1" width="3" height="2" fill="#6a5040" opacity="0.7"/>
<rect x="98.0" y="745.0" width="3" height="2" fill="#6a5040" opacity="0.7"/>
<rect x="99.2" y="749.9" width="3" height="2" fill="#6a5040" opacity="0.7"/>
<rect x="102.6" y="754.8" width="3" height="2" fill="#6a5040" opacity="0.7"/>
<rect x="108.3" y="759.4" width="3" height="2" fill="#6a5040" opacity="0.7"/>
<rect x="116.1" y="763.8" width="3" height="2" fill="#6a5040" opacity="0.7"/>
<rect x="125.8" y="767.7" width="3" height="2" fill="#6a5040" opacity="0.7"/>
<rect x="137.3" y="771.3" width="3" height="2" fill="#6a5040" opacity="0.7"/>
<rect x="150.3" y="774.3" width="3" height="2" fill="#6a5040" opacity="0.7"/>
<rect x="164.6" y="776.7" width="3" height="2" fill="#6a5040" opacity="0.7"/>
<rect x="179.9" y="778.5" width="3" height="2" fill="#6a5040" opacity="0.7"/>
<rect x="195.9" y="779.6" width="3" height="2" fill="#6a5040" opacity="0.7"/>
<rect x="212.2" y="780.0" width="3" height="2" fill="#6a5040" opacity="0.7"/>
<ellipse cx="222" cy="749" rx="108" ry="32" fill="url(#pit)"/>
<path d="M156 757 Q152 735 160 722 Q166 732 170 724 Q176 708 184 712 Q190 700 196 704 Q200 692 206 700 Q214 690 218 706 Q226 716 224 730 Q230 742 226 757 Z" fill="#d8501a"/>
<path d="M162 757 Q162 742 170 734 Q176 744 182 728 Q188 738 194 722 Q200 736 206 718 Q212 732 216 726 Q220 744 214 757 Z" fill="#f47a22"/>
<path d="M170 757 Q172 746 178 742 Q184 750 190 738 Q196 748 202 740 Q206 750 206 757 Z" fill="#ffb446" opacity="0.85"/>
<path d="M168 740 L176 752 M186 730 L184 750 M200 728 L204 748" stroke="#3a2a22" stroke-width="1.5" opacity="0.6"/>
<path d="M232.2 736.8 l8.9 0.6" stroke="#6a6664" stroke-width="1.2" opacity="0.7"/>
<path d="M219.5 737.3 l6.9 -0.8" stroke="#6a6664" stroke-width="1.2" opacity="0.7"/>
<path d="M204.8 752.8 l9.2 -2.0" stroke="#6a6664" stroke-width="1.2" opacity="0.7"/>
<path d="M254.5 747.7 l9.2 1.4" stroke="#6a6664" stroke-width="1.2" opacity="0.7"/>
<path d="M195.8 739.8 l7.0 -1.0" stroke="#6a6664" stroke-width="1.2" opacity="0.7"/>
<path d="M185.7 738.8 l9.2 2.6" stroke="#6a6664" stroke-width="1.2" opacity="0.7"/>
<path d="M171.5 730.3 l11.9 -1.5" stroke="#6a6664" stroke-width="1.2" opacity="0.7"/>
<path d="M157.1 740.1 l13.0 -2.5" stroke="#6a6664" stroke-width="1.2" opacity="0.7"/>
<path d="M251.8 749.6 l12.8 -1.3" stroke="#6a6664" stroke-width="1.2" opacity="0.7"/>
<path d="M155.7 747.2 l11.1 -2.1" stroke="#6a6664" stroke-width="1.2" opacity="0.7"/>
<path d="M157 688 Q188 680 218 688 L216 724 Q188 732 161 724 Z" fill="#111"/>
<ellipse cx="188" cy="687" rx="31" ry="6.5" fill="#5a5a58"/>
<ellipse cx="176" cy="676" rx="20" ry="10" fill="#a8a8a6" opacity="0.45"/>
<path d="M157 686 Q188 640 212 688" fill="none" stroke="#222" stroke-width="1.2"/>
<path d="M61 708 L142 640 M140 669 L159 688" stroke="#151515" stroke-width="2"/>
<path d="M86 613 L158 688" stroke="#151515" stroke-width="2.8"/>
<path d="M190.5 583 L140 641 M190.5 583 L218 652" stroke="#151515" stroke-width="1.6"/>
<path d="M191 585 L192 757" stroke="#4a4440" stroke-width="2.2"/>
<path d="M205 683 L238 666" stroke="#b8c0c8" stroke-width="2"/>
</g></svg>


<div class="a" style="left:20px;top:763px;font-size:13px;color:#1a1a1a;line-height:18px"><span style="letter-spacing:-0.12px">Have a Happy Halloween! I had a great time at the</span><br><span style="letter-spacing:0px">Hope Valley RI cauldron party last Sunday. Lots of</span><br><span style="letter-spacing:0.24px">lots of pumpkins, a big cauldron with all of the</span><br><span style="letter-spacing:0.18px">goodies, and a fine time. Shot a lot of photos with nothing</span></div>

<div class="a" style="left:423px;top:807.5px;font-size:13px;font-weight:bold;color:#1b2a7c;line-height:16px">been notified about tag changes on<br>this article, but wasn't</div>
<svg class="a" style="left:660px;top:800px" width="40" height="32"><ellipse cx="19" cy="7" rx="7" ry="8" fill="#c8c8c8"/><path d="M2 23 Q3 15 19 15 Q35 15 36 23 Z" fill="#c8c8c8"/></svg>
<div class="a" style="left:705px;top:814px;font-size:11px;color:#444;line-height:13px">29 minutes</div>

<div id="side" class="a"></div>
<div class="a" style="left:790px;top:264px;width:211px;height:26px;border-radius:3px;background:linear-gradient(#8f8f8f,#6f6f6f);box-shadow:0 1px 1px rgba(0,0,0,.25)"></div>
<div class="a" style="left:862px;top:269px;font-size:15px;font-weight:bold;color:#fafafa;line-height:18px">Article</div>
<div class="a" style="left:973px;top:265px;width:1px;height:25px;background:#a2a2a2"></div>
<svg class="a" style="left:982px;top:274px" width="12" height="8"><path d="M0.5 0.5 L11 0.5 L5.75 6 Z" fill="#e8e8e8"/></svg>
<div class="a" style="left:790px;top:303px;width:219px;height:1px;background:#d2d2d2"></div>
<svg class="a" style="left:985px;top:314.5px" width="14" height="14"><circle cx="7" cy="7" r="4.8" fill="#8e8e8e"/><circle cx="11.90" cy="7.00" r="1.45" fill="#8e8e8e"/><circle cx="10.46" cy="10.46" r="1.45" fill="#8e8e8e"/><circle cx="7.00" cy="11.90" r="1.45" fill="#8e8e8e"/><circle cx="3.54" cy="10.46" r="1.45" fill="#8e8e8e"/><circle cx="2.10" cy="7.00" r="1.45" fill="#8e8e8e"/><circle cx="3.54" cy="3.54" r="1.45" fill="#8e8e8e"/><circle cx="7.00" cy="2.10" r="1.45" fill="#8e8e8e"/><circle cx="10.46" cy="3.54" r="1.45" fill="#8e8e8e"/><circle cx="7" cy="7" r="2.1" fill="#eee"/></svg>
<div class="a" style="left:800px;top:345px;width:111px;height:22px;background:#f7f7f7;border-radius:4px 4px 0 0"></div>
<div class="a" style="left:851px;top:349px;font-size:12px;color:#222;line-height:14px">Favorites</div>
<div class="a" style="left:947px;top:347px;font-size:12px;color:#1b2a7c;line-height:14px">Directory</div>
<div class="a" style="left:800px;top:365px;width:199px;height:297px;background:#f9f9f9;border-radius:0 4px 4px 4px"></div>
<div class="a" style="left:797px;top:426px;font-size:12px;color:#1b2a7c;line-height:14px">Japanese Business Office</div>
<div class="a" style="left:832px;top:643px;font-size:12px;color:#1b2a7c;line-height:14px">Live Blog</div>
<div class="a" style="left:800px;top:668px;width:191px;height:22px;background:#fff;border:1px solid #cfcfcf;border-radius:3px"></div>
<div class="a" style="left:874.5px;top:672px;font-size:12px;color:#333;line-height:14px">to look up a space.</div>
<div class="a" style="left:790px;top:707px;width:219px;height:1px;background:#d2d2d2"></div>
<div class="a" style="left:815px;top:716px;font-size:14.5px;font-weight:bold;color:#444;line-height:18px">Profile of Greg Lloyd</div>
<div class="a" style="left:800px;top:744px;width:107px;height:16px;background:#fff;border:1px solid #cfcfcf;border-radius:4px"></div>
<svg class="a" style="left:894px;top:746px" width="8" height="12"><path d="M0.5 4.5 L7.5 4.5 L4 0.5 Z M0.5 7 L7.5 7 L4 11 Z" fill="#222"/></svg>
<div class="a" style="left:790px;top:788px;width:219px;height:1px;background:#d2d2d2"></div>
<div class="a" style="left:800px;top:827px;font-size:12px;color:#333;line-height:14px">Welcome to the Traction TeamPage</div>

<div id="pscroll" class="a"></div>
<div id="pthumb" class="a"></div>
<div id="bottomline" class="a"></div>

<div id="pop" class="a">
  <!-- item 1 -->
  <div class="item" style="top:0;height:115px">
    <svg class="av" style="left:10.5px;top:10.5px" width="30" height="29"><rect x="0.5" y="0.5" width="29" height="28" rx="4" fill="#fff" stroke="#d4dcec"/><path d="M14 4 Q16 3 17 6 L17 10 L23 4 Q27 3 25 8 L20 12 Q23 15 22 18 L26 20 Q28 22 24 23 L21 22 L21 28 L9 28 L9 21 Q5 20 5 17 Q6 14 10 15 L12 14 Q12 10 15 10 Z" fill="#b8924e"/><path d="M11 20 L13 28 M17 21 L19 28" stroke="#7a5a2a" stroke-width="1.5"/><ellipse cx="16.5" cy="15.5" rx="2.8" ry="2.4" fill="#d8c040"/><path d="M15 7 L15 11 M22 6 L19 10" stroke="#5a4220" stroke-width="1.2"/></svg>
    <div class="tt">re: Post a test article with one inline image and one .pdf<br>attachment</div>
    <div class="bd" style="top:43.5px">Hi @grl – Did you take this photo?</div>
    <div class="sp" style="top:61.6px">Space <b>Demo</b></div>
    <div class="ts">2 minutes ago</div>
    <svg class="bub"><path d="M6 0.8 Q11.3 0.8 11.3 4 Q11.3 7.2 6 7.2 L4.5 7.2 L1.8 9 L2.6 6.6 Q0.7 5.7 0.7 4 Q0.7 0.8 6 0.8 Z" fill="none" stroke="#777" stroke-width="1"/></svg>
  </div>
  <!-- item 2 -->
  <div class="item" style="top:115px">
    <svg class="av" width="32" height="32"><rect width="32" height="32" fill="#cdcfd3"/><path d="M2 32 Q4 27 16 28 Q28 27 31 32 Z" fill="#5a6290"/><path d="M8 29 L10 32 M22 29 L20 32" stroke="#b0a8c8" stroke-width="1"/><ellipse cx="16" cy="18.5" rx="9.5" ry="10.5" fill="#d6968a"/><path d="M3 16 Q1 2 16 2 Q31 2 30 15 L26 15 Q25 9 17 9.5 Q9 9 7 16 Z" fill="#7c6248"/><circle cx="12" cy="16" r="2.8" fill="none" stroke="#4a3230" stroke-width="1.3"/><circle cx="20.5" cy="16" r="2.8" fill="none" stroke="#4a3230" stroke-width="1.3"/><path d="M14.8 16 L17.7 16" stroke="#4a3230" stroke-width="1"/><path d="M12 23.5 Q16 26.5 20 23.5" stroke="#f2e8d8" stroke-width="1.8" fill="none"/><rect x="5" y="0" width="22" height="1.2" fill="#5a1a10"/></svg>
    <div class="tt">re: Make me feel confortable with Mac and the external keyboard</div>
    <div class="bd" style="top:29px"><span style="letter-spacing:0.535px">The Modifier Keys settings are different for each keyboard. In the screenshots below,</span><br><span style="letter-spacing:0.513px">you will see that on both keyboards, Caps Lock is set to Control. On my Das Keyboard,</span><br>the ...</div>
    <div class="sp" style="top:76.5px;letter-spacing:0.12px">Space <b>Japanese Business Office</b> &gt; Project <b>Office Works</b></div>
    <div class="ts">6 hours ago</div>
    <svg class="bub"><path d="M6 0.8 Q11.3 0.8 11.3 4 Q11.3 7.2 6 7.2 L4.5 7.2 L1.8 9 L2.6 6.6 Q0.7 5.7 0.7 4 Q0.7 0.8 6 0.8 Z" fill="none" stroke="#777" stroke-width="1"/></svg>
  </div>
  <!-- item 3 -->
  <div class="item rd" style="top:230px;height:116px">
    <svg class="av" width="32" height="32"><rect width="32" height="32" fill="#fff"/><ellipse cx="16.5" cy="10.5" rx="8.3" ry="9.3" fill="#b9b9b9"/><rect x="12" y="17" width="9" height="7" fill="#b9b9b9"/><path d="M0 32 L0 28.5 Q1 24 9 23.5 L24 23.5 Q31.5 24 32 28.5 L32 32 Z" fill="#b9b9b9"/></svg>
    <div class="tt" style="letter-spacing:0.33px">re: Follow myself?</div>
    <div class="bd" style="top:29px"><span style="letter-spacing:0.68px">I fixed it so that Follow/Unfollow will no longer show up for the user himself/herself in</span><br><span style="letter-spacing:0.598px">either the user profile popup dialog or in the various user profile pages.</span></div>
    <div class="sp" style="top:61.6px">Space <b>Japanese Business Office</b></div>
    <div class="ts">20 hours ago</div>
    <svg class="bub"><path d="M6 0.8 Q11.3 0.8 11.3 4 Q11.3 7.2 6 7.2 L4.5 7.2 L1.8 9 L2.6 6.6 Q0.7 5.7 0.7 4 Q0.7 0.8 6 0.8 Z" fill="none" stroke="#777" stroke-width="1"/></svg>
  </div>
  <!-- item 4 -->
  <div class="item rd" style="top:346px">
    <svg class="av" width="32" height="32"><rect width="32" height="32" fill="#fff"/><ellipse cx="16.5" cy="10.5" rx="8.3" ry="9.3" fill="#b9b9b9"/><rect x="12" y="17" width="9" height="7" fill="#b9b9b9"/><path d="M0 32 L0 28.5 Q1 24 9 23.5 L24 23.5 Q31.5 24 32 28.5 L32 32 Z" fill="#b9b9b9"/></svg>
    <div class="tt" style="letter-spacing:0.33px">re: Follow myself?</div>
    <div class="bd" style="top:29px"><span style="letter-spacing:0.665px">I thought we were already hiding it in the user profile popup dialog -- and we should</span><br><span style="letter-spacing:0.621px">be, according to the code -- but apparently not. We really should be.</span></div>
    <div class="sp" style="top:61.6px">Space <b>Japanese Business Office</b></div>
    <div class="ts">21 hours ago</div>
    <svg class="bub"><path d="M6 0.8 Q11.3 0.8 11.3 4 Q11.3 7.2 6 7.2 L4.5 7.2 L1.8 9 L2.6 6.6 Q0.7 5.7 0.7 4 Q0.7 0.8 6 0.8 Z" fill="none" stroke="#777" stroke-width="1"/></svg>
  </div>
  <!-- item 5 -->
  <div class="item" style="top:461px">
    <svg class="av" width="32" height="32"><rect width="32" height="32" fill="#cdcfd3"/><path d="M2 32 Q4 27 16 28 Q28 27 31 32 Z" fill="#5a6290"/><path d="M8 29 L10 32 M22 29 L20 32" stroke="#b0a8c8" stroke-width="1"/><ellipse cx="16" cy="18.5" rx="9.5" ry="10.5" fill="#d6968a"/><path d="M3 16 Q1 2 16 2 Q31 2 30 15 L26 15 Q25 9 17 9.5 Q9 9 7 16 Z" fill="#7c6248"/><circle cx="12" cy="16" r="2.8" fill="none" stroke="#4a3230" stroke-width="1.3"/><circle cx="20.5" cy="16" r="2.8" fill="none" stroke="#4a3230" stroke-width="1.3"/><path d="M14.8 16 L17.7 16" stroke="#4a3230" stroke-width="1"/><path d="M12 23.5 Q16 26.5 20 23.5" stroke="#f2e8d8" stroke-width="1.8" fill="none"/><rect x="5" y="0" width="22" height="1.2" fill="#5a1a10"/></svg>
    <div class="tt" style="letter-spacing:0.4px">I can't believe these options are checked ...</div>
    <div class="bd" style="top:29px;letter-spacing:0.434px">I can't believe these options are checked by default. Do Eclipse developers use Eclipse?</div>
    <div class="sp" style="top:47px">Space <b>Live Blog</b></div>
    <div class="ts">Nov 3, 2014 10:43a</div>
    <svg class="bub"><path d="M6 0.8 Q11.3 0.8 11.3 4 Q11.3 7.2 6 7.2 L4.5 7.2 L1.8 9 L2.6 6.6 Q0.7 5.7 0.7 4 Q0.7 0.8 6 0.8 Z" fill="none" stroke="#777" stroke-width="1"/></svg>
  </div>
  <!-- item 6 -->
  <div class="item" style="top:576px;border-bottom:none">
    <svg class="av" width="32" height="32"><ellipse cx="16.5" cy="10.5" rx="8.3" ry="9.3" fill="#c2c2c2"/><rect x="12" y="17" width="9" height="7" fill="#c2c2c2"/><path d="M0 32 L0 28.5 Q1 24 9 23.5 L24 23.5 Q31.5 24 32 28.5 L32 32 Z" fill="#c2c2c2"/></svg>
    <div class="tt">Log Further Information for Email Out Operations <span style="font-weight:normal;color:#222">was edited</span></div>
    <div class="ts">Nov 1, 2014 5:01p</div>
    <svg class="bub" style="top:10px"><path d="M1.5 10 L2.2 7.2 L8.5 0.9 L11 3.4 L4.7 9.7 Z" fill="#666"/></svg>
  </div>
  <div id="pstrack"></div>
  <div id="psthumb"></div>
  <div id="pfoot"><span style="position:absolute;left:134px">Mark All Read</span><span style="position:absolute;left:208px">·</span><span style="position:absolute;left:220px">Clear All Read</span><span style="position:absolute;left:296px">·</span><span style="position:absolute;left:307.5px">View All Notifications</span><span style="position:absolute;left:418px">·</span><span style="position:absolute;left:430px">Settings</span></div>
</div>



</body></html>
